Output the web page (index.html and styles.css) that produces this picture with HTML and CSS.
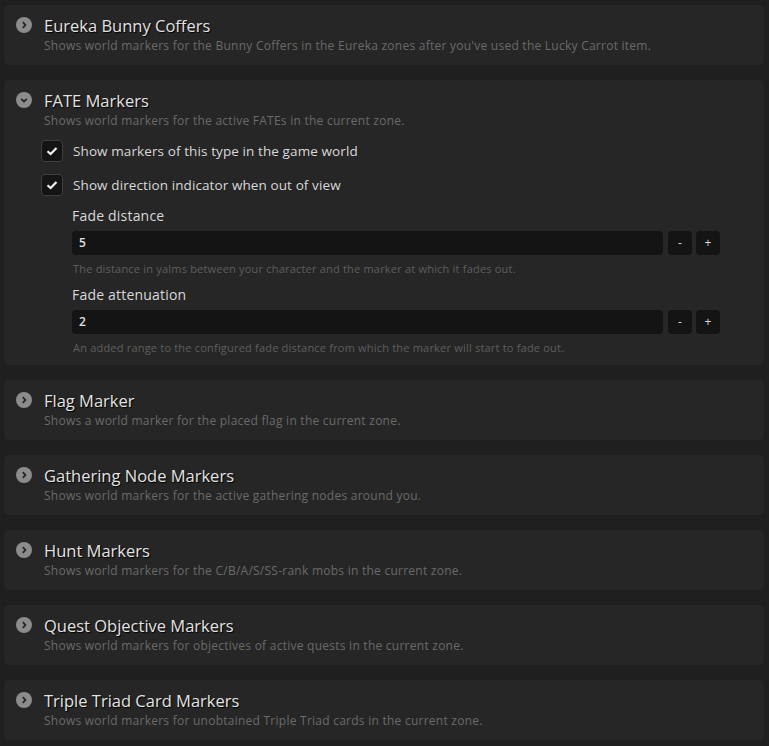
FILE: index.html
```html
<!DOCTYPE html>
<html>
<head>
<meta charset="utf-8">
<link rel="stylesheet" href="styles.css">
</head>
<body>
<div class="list">
  <div class="card">
    <div class="head"><span class="chev"><svg viewBox="0 0 16 16" width="16" height="16"><circle cx="8" cy="8" r="8" fill="#8c8c8c"/><path d="M6.8 5.2 L9.4 8 L6.8 10.8" fill="none" stroke="#262626" stroke-width="1.8"/></svg></span><span class="title">Eureka Bunny Coffers</span></div>
    <div class="desc">Shows world markers for the Bunny Coffers in the Eureka zones after you've used the Lucky Carrot item.</div>
  </div>
  <div class="card open">
    <div class="head"><span class="chev"><svg viewBox="0 0 16 16" width="16" height="16"><circle cx="8" cy="8" r="8" fill="#8c8c8c"/><path d="M5.2 6.8 L8 9.4 L10.8 6.8" fill="none" stroke="#262626" stroke-width="1.8"/></svg></span><span class="title">FATE Markers</span></div>
    <div class="desc">Shows world markers for the active FATEs in the current zone.</div>
    <div class="opts">
      <div class="check"><span class="box"><svg viewBox="0 0 20 20" width="20" height="20"><path d="M5.5 10.2 L8.6 13 L14.5 7" fill="none" stroke="#f0f0f0" stroke-width="2.2"/></svg></span><span class="clabel">Show markers of this type in the game world</span></div>
      <div class="check"><span class="box"><svg viewBox="0 0 20 20" width="20" height="20"><path d="M5.5 10.2 L8.6 13 L14.5 7" fill="none" stroke="#f0f0f0" stroke-width="2.2"/></svg></span><span class="clabel">Show direction indicator when out of view</span></div>
      <div class="field">
        <div class="flabel">Fade distance</div>
        <div class="frow"><div class="input">5</div><div class="btn">-</div><div class="btn">+</div></div>
        <div class="help">The distance in yalms between your character and the marker at which it fades out.</div>
      </div>
      <div class="field">
        <div class="flabel">Fade attenuation</div>
        <div class="frow"><div class="input">2</div><div class="btn">-</div><div class="btn">+</div></div>
        <div class="help">An added range to the configured fade distance from which the marker will start to fade out.</div>
      </div>
    </div>
  </div>
  <div class="card">
    <div class="head"><span class="chev"><svg viewBox="0 0 16 16" width="16" height="16"><circle cx="8" cy="8" r="8" fill="#8c8c8c"/><path d="M6.8 5.2 L9.4 8 L6.8 10.8" fill="none" stroke="#262626" stroke-width="1.8"/></svg></span><span class="title">Flag Marker</span></div>
    <div class="desc">Shows a world marker for the placed flag in the current zone.</div>
  </div>
  <div class="card">
    <div class="head"><span class="chev"><svg viewBox="0 0 16 16" width="16" height="16"><circle cx="8" cy="8" r="8" fill="#8c8c8c"/><path d="M6.8 5.2 L9.4 8 L6.8 10.8" fill="none" stroke="#262626" stroke-width="1.8"/></svg></span><span class="title">Gathering Node Markers</span></div>
    <div class="desc">Shows world markers for the active gathering nodes around you.</div>
  </div>
  <div class="card">
    <div class="head"><span class="chev"><svg viewBox="0 0 16 16" width="16" height="16"><circle cx="8" cy="8" r="8" fill="#8c8c8c"/><path d="M6.8 5.2 L9.4 8 L6.8 10.8" fill="none" stroke="#262626" stroke-width="1.8"/></svg></span><span class="title">Hunt Markers</span></div>
    <div class="desc">Shows world markers for the C/B/A/S/SS-rank mobs in the current zone.</div>
  </div>
  <div class="card">
    <div class="head"><span class="chev"><svg viewBox="0 0 16 16" width="16" height="16"><circle cx="8" cy="8" r="8" fill="#8c8c8c"/><path d="M6.8 5.2 L9.4 8 L6.8 10.8" fill="none" stroke="#262626" stroke-width="1.8"/></svg></span><span class="title">Quest Objective Markers</span></div>
    <div class="desc">Shows world markers for objectives of active quests in the current zone.</div>
  </div>
  <div class="card">
    <div class="head"><span class="chev"><svg viewBox="0 0 16 16" width="16" height="16"><circle cx="8" cy="8" r="8" fill="#8c8c8c"/><path d="M6.8 5.2 L9.4 8 L6.8 10.8" fill="none" stroke="#262626" stroke-width="1.8"/></svg></span><span class="title">Triple Triad Card Markers</span></div>
    <div class="desc">Shows world markers for unobtained Triple Triad cards in the current zone.</div>
  </div>
</div>
</body>
</html>
```
FILE: styles.css
```css
html, body {
  margin: 0;
  padding: 0;
  background: #1f1f1f;
  height: 100%;
  overflow: hidden;
}
body {
  font-family: "Open Sans", "DejaVu Sans", sans-serif;
}
.list {
  display: flex;
  flex-direction: column;
  gap: 15px;
  padding: 5px 5px 5px 4px;
  width: 760px;
}
.card {
  background: #262626;
  border-radius: 5px;
  padding: 9px 12px 11px 12px;
}
.card.open {
  padding-bottom: 9px;
}
.head {
  display: flex;
  align-items: center;
  height: 22px;
  gap: 12px;
}
.chev {
  width: 16px;
  height: 16px;
  display: flex;
}
.title {
  color: #e2e2e2;
  font-size: 16.5px;
  text-shadow: 1px 1px 1px #000;
}
.desc {
  color: #6a6a6a;
  font-size: 12px;
  line-height: 16px;
  margin-top: 2px;
  margin-left: 28px;
  letter-spacing: 0.25px;
}
.opts {
  margin: 11px 32px 0 25px;
  display: flex;
  flex-direction: column;
}
.check {
  display: flex;
  align-items: center;
  gap: 10px;
  height: 22px;
  margin-bottom: 12px;
}
.box {
  width: 20px;
  height: 20px;
  border: 1px solid #3e3e3e;
  background: #141414;
  border-radius: 4px;
  display: flex;
  align-items: center;
  justify-content: center;
}
.box svg { width: 20px; height: 20px; }
.clabel {
  color: #d8d8d8;
  font-size: 13.5px;
  letter-spacing: 0.1px;
}
.field {
  margin-left: 31px;
  display: flex;
  flex-direction: column;
}
.check + .check { margin-bottom: 10px; }
.flabel {
  color: #d8d8d8;
  font-size: 14px;
  line-height: 20px;
  letter-spacing: 0.2px;
  margin-bottom: 5px;
}
.frow {
  display: flex;
  gap: 4px;
  height: 24px;
}
.input {
  flex: 1;
  background: #141414;
  border-radius: 4px;
  color: #e0e0e0;
  font-size: 12px;
  font-weight: 600;
  line-height: 24px;
  padding-left: 7px;
  margin-right: 1px;
}
.btn {
  width: 24px;
  background: #141414;
  border-radius: 4px;
  color: #d8d8d8;
  font-size: 12px;
  line-height: 24px;
  text-align: center;
}
.help {
  color: #5e5e5e;
  font-size: 11px;
  line-height: 16px;
  margin: 6px 0 8px 1px;
  letter-spacing: 0.2px;
}
.field:last-child .help {
  margin-bottom: 0;
}
```
